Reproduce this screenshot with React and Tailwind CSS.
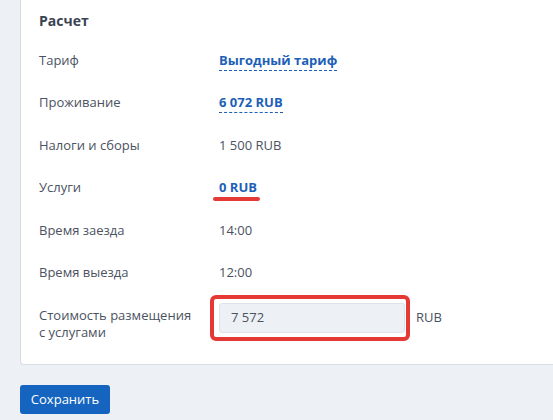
import React from 'react';

const rows = [
  { label: 'Тариф', value: 'Выгодный тариф', link: true },
  { label: 'Проживание', value: '6 072 RUB', link: true },
  { label: 'Налоги и сборы', value: '1 500 RUB' },
  { label: 'Услуги', value: '0 RUB', link: true, mark: true },
  { label: 'Время заезда', value: '14:00' },
  { label: 'Время выезда', value: '12:00' },
];

export default function App() {
  return (
    <div
      className="w-[553px] h-[420px] overflow-hidden bg-[#edf0f4]"
      style={{ fontFamily: '"Open Sans", "Noto Sans", sans-serif' }}
    >
      {/* Calculation card */}
      <div className="ml-5 w-[560px] bg-white border-l border-b border-[#d6dce4] rounded-bl-[4px]">
        <div className="h-[39px] pl-[18px] pt-[11px] text-[14px] leading-5 font-bold text-[#3a4352]">
          Расчет
        </div>

        {rows.map((r) => (
          <div key={r.label} className="flex items-center h-[42.5px] pl-[18px] text-[13px]">
            <div className="w-[180px] text-[#4b5261]">{r.label}</div>
            {r.link ? (
              <div className="relative">
                <span
                  className={
                    r.mark
                      ? 'font-bold text-[#1d5fb7] pb-[1px]'
                      : 'font-bold text-[#1d5fb7] border-b border-dashed border-[#1d5fb7] pb-[1px]'
                  }
                >
                  {r.value}
                </span>
                {r.mark && (
                  <span className="absolute left-[-6px] top-[19px] w-[47px] h-[4px] rounded-full bg-[#e53935]" />
                )}
              </div>
            ) : (
              <div className="text-[#4b5261]">{r.value}</div>
            )}
          </div>
        ))}

        <div className="flex items-start h-[70px] pl-[18px] text-[13px]">
          <div className="w-[180px] pt-[13px] leading-[17px] text-[#4b5261]">
            Стоимость размещения
            <br />с услугами
          </div>
          <div className="relative mt-[9px]">
            <div className="w-[186px] h-[30px] flex items-center px-[11px] bg-[#edf0f4] border border-[#dfe3e9] rounded-[3px] text-[#4b5261]">
              7 572
            </div>
            <span className="absolute left-[-9px] top-[-8px] w-[200px] h-[46px] border-4 border-[#e53935] rounded-[6px]" />
          </div>
          <div className="ml-[11px] mt-[9px] h-[30px] flex items-center text-[#4b5261]">RUB</div>
        </div>
      </div>

      <button className="ml-5 mt-[20px] h-[29px] w-[90px] rounded-[3px] bg-[#1565c0] text-white text-[13px]">
        Сохранить
      </button>
    </div>
  );
}
